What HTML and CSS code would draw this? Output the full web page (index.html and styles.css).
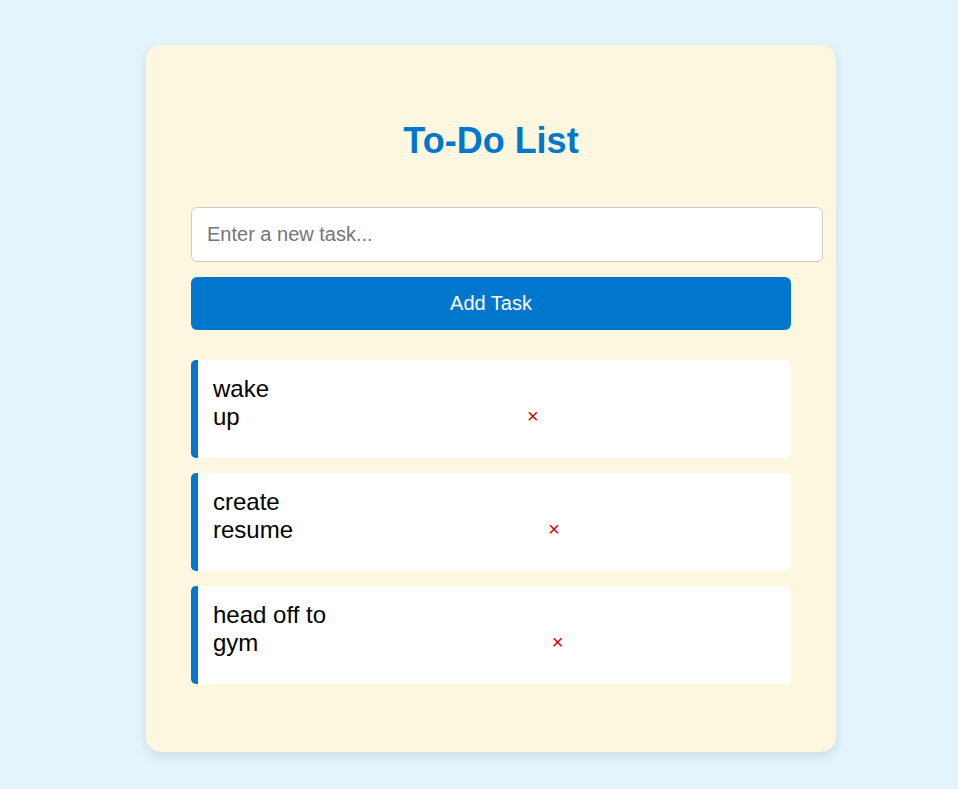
FILE: index.html
```html
<!DOCTYPE html>
<html lang="en">
<head>
<meta charset="utf-8">
<title>To-Do List</title>
<link rel="stylesheet" href="styles.css">
</head>
<body>
  <div class="card">
    <h1 class="title">To-Do List</h1>
    <input class="task-input" type="text" placeholder="Enter a new task...">
    <button class="add-btn">Add Task</button>
    <ul class="task-list">
      <li class="task"><span class="task-text">wake up</span><button class="delete-btn">×</button></li>
      <li class="task"><span class="task-text">create resume</span><button class="delete-btn">×</button></li>
      <li class="task"><span class="task-text">head off to gym</span><button class="delete-btn">×</button></li>
    </ul>
  </div>
</body>
</html>
```

FILE: styles.css
```css
body {
  margin: 0;
  padding: 45px 0 37px 24px;
  background: #e3f4fd;
  font-family: "Liberation Sans", Arial, sans-serif;
  display: flex;
  justify-content: center;
}

.card {
  width: 600px;
  padding: 45px 45px 53px;
  background: #fef7df;
  border-radius: 15px;
  box-shadow: 0 4px 12px rgba(0, 0, 0, 0.1);
}

.title {
  margin: 30px 0 45px;
  font-size: 36px;
  font-weight: bold;
  color: #0077cc;
  text-align: center;
}

.task-input {
  display: block;
  width: 100%;
  margin: 0;
  padding: 15px;
  font-family: "Liberation Sans", Arial, sans-serif;
  font-size: 20px;
  border: 1px solid #ccc;
  border-radius: 6px;
  background: #fff;
  color: #000;
}

.task-input::placeholder {
  color: #757575;
}

.add-btn,
.delete-btn {
  box-sizing: border-box;
  width: 100%;
  margin: 15px 0 0;
  padding: 15px;
  font-family: "Liberation Sans", Arial, sans-serif;
  font-size: 20px;
  border: none;
  border-radius: 6px;
}

.add-btn {
  display: block;
  background: #0077cc;
  color: #fff;
}

.delete-btn {
  background: transparent;
  color: #e00000;
  line-height: normal;
}

.task-list {
  list-style: none;
  padding: 0;
  margin: 30px 0 8px;
}

.task {
  display: flex;
  margin-bottom: 15px;
  padding: 15px;
  background: #fff;
  border-left: 7px solid #0077cc;
  border-radius: 5px;
  font-size: 24px;
  color: #000;
}
```
